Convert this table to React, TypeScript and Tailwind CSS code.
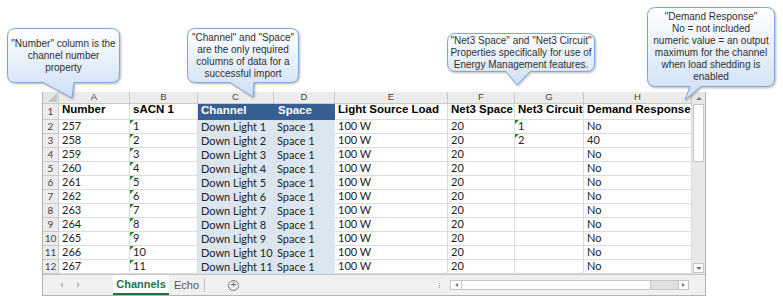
import React from 'react';

interface Row {
  num: number;
  sacn: number;
  channel: string;
  space: string;
  load: string;
  net3Space: string;
  circuit: string;
  demand: string;
}

const ROWS: Row[] = Array.from({ length: 11 }, (_, i) => ({
  num: 257 + i,
  sacn: i + 1,
  channel: `Down Light ${i + 1}`,
  space: 'Space 1',
  load: '100 W',
  net3Space: '20',
  circuit: i < 2 ? String(i + 1) : '',
  demand: i === 1 ? '40' : 'No',
}));

const COL_LETTERS = ['A', 'B', 'C', 'D', 'E', 'F', 'G', 'H'];

interface CalloutProps {
  id: string;
  left: number;
  top: number;
  w: number;
  h: number;
  x1: number;
  x2: number;
  tx: number;
  ty: number;
  lines: string[];
}

// speech bubble drawn in svg, text laid over it
const Callout: React.FC<CalloutProps> = ({ id, left, top, w, h, x1, x2, tx, ty, lines }) => {
  const r = 8;
  const d = `M${r + 0.5},0.5 H${w - r - 0.5} Q${w - 0.5},0.5 ${w - 0.5},${r + 0.5} V${h - r - 0.5} Q${w - 0.5},${h - 0.5} ${w - r - 0.5},${h - 0.5} H${x2} L${tx},${ty} L${x1},${h - 0.5} H${r + 0.5} Q0.5,${h - 0.5} 0.5,${h - r - 0.5} V${r + 0.5} Q0.5,0.5 ${r + 0.5},0.5 Z`;
  return (
    <div className="absolute" style={{ left, top, width: w, height: h }}>
      <svg
        className="absolute left-0 top-0 overflow-visible drop-shadow-[1px_1px_1px_rgba(0,0,0,0.28)]"
        width={Math.max(w, tx) + 2}
        height={ty + 2}
      >
        <defs>
          <linearGradient id={id} x1="0" y1="0" x2="0" y2="1">
            <stop offset="0" stopColor="#ffffff" />
            <stop offset="1" stopColor="#cddff5" />
          </linearGradient>
        </defs>
        <path d={d} fill={`url(#${id})`} stroke="#7fa5dc" strokeWidth="1" />
      </svg>
      <div className="relative flex h-full flex-col items-center justify-center font-['Liberation_Sans',Arial,sans-serif] text-[10px] leading-[12px] text-[#303030]">
        {lines.map((l) => (
          <span key={l} className="whitespace-nowrap">{l}</span>
        ))}
      </div>
    </div>
  );
};

const Flag = () => (
  <span className="absolute left-0 top-0 h-0 w-0 border-r-[4px] border-t-[4px] border-r-transparent border-t-[#1e8a2e]" />
);

const cell = 'relative flex h-[14px] items-center overflow-hidden whitespace-nowrap border-b border-r border-[#dcdcdc] bg-white pl-[3px]';
const blueCell = 'relative flex h-[14px] items-center overflow-hidden whitespace-nowrap bg-[#dce6f1] pl-[3px]';
const rowHead = 'flex h-[14px] items-center justify-center border-b border-r border-[#c9c9c9] bg-[#ececec] text-[10px] text-[#444]';

export default function App() {
  return (
    <div className="relative h-[296px] w-[783px] overflow-hidden bg-white font-['Lato',sans-serif] text-[11px] text-[#222]">
      <div className="pl-[42px] pt-[92px]">
        <div className="w-[664px] border border-t-0 border-[#b4b4b4]">
          <div className="flex">
            <div className="grid grid-cols-[16px_71px_68px_76px_61px_113px_67px_69px_108px]">
              {/* column letters */}
              <div className="relative h-[12px] border-b border-r border-[#c9c9c9] bg-[#e6e6e6]">
                <span className="absolute bottom-[1px] right-[1px] h-0 w-0 border-b-[9px] border-l-[9px] border-b-[#c4c4c4] border-l-transparent" />
              </div>
              {COL_LETTERS.map((c) => (
                <div
                  key={c}
                  className="flex h-[12px] items-center justify-center border-b border-r border-[#c9c9c9] bg-[#ececec] font-['Liberation_Sans',Arial,sans-serif] text-[9.5px] text-[#444]"
                >
                  {c}
                </div>
              ))}

              {/* row 1 headers */}
              <div className="flex h-[16px] items-center justify-center border-b border-r border-[#c9c9c9] bg-[#ececec] text-[10px] text-[#444]">1</div>
              {['Number', 'sACN 1'].map((t) => (
                <div key={t} className="flex h-[16px] items-end overflow-hidden whitespace-nowrap border-b border-r border-[#dcdcdc] pb-[1px] pl-[3px] font-['Liberation_Sans',Arial,sans-serif] text-[11.5px] font-bold text-black">{t}</div>
              ))}
              <div className="flex h-[16px] items-end overflow-hidden whitespace-nowrap bg-[#366092] pb-[1px] pl-[3px] font-['Liberation_Sans',Arial,sans-serif] text-[11.5px] font-bold text-white">Channel</div>
              <div className="flex h-[16px] items-end overflow-hidden whitespace-nowrap bg-[#366092] pb-[1px] pl-[4px] font-['Liberation_Sans',Arial,sans-serif] text-[11.5px] font-bold text-white">Space</div>
              {['Light Source Load', 'Net3 Space', 'Net3 Circuit', 'Demand Response'].map((t) => (
                <div key={t} className="flex h-[16px] items-end overflow-hidden whitespace-nowrap border-b border-r border-[#dcdcdc] pb-[1px] pl-[3px] font-['Liberation_Sans',Arial,sans-serif] text-[11.5px] font-bold text-black">{t}</div>
              ))}

              {ROWS.map((r, i) => (
                <React.Fragment key={r.num}>
                  <div className={rowHead}>{i + 2}</div>
                  <div className={cell}>{r.num}</div>
                  <div className={cell}><Flag />{r.sacn}</div>
                  <div className={blueCell}>{r.channel}</div>
                  <div className={blueCell}>{r.space}</div>
                  <div className={cell}>{r.load}</div>
                  <div className={cell}>{r.net3Space}</div>
                  <div className={cell}>{r.circuit && <Flag />}{r.circuit}</div>
                  <div className={cell}>{r.demand}</div>
                </React.Fragment>
              ))}
            </div>

            {/* vertical scrollbar */}
            <div className="flex w-[14px] flex-col items-center bg-[#e8e8e8]">
              <div className="flex h-[12px] w-full items-center justify-center">
                <span className="h-0 w-0 border-x-[3px] border-b-[3px] border-x-transparent border-b-[#777]" />
              </div>
              <div className="h-[58px] w-[11px] border border-[#c6c6c6] bg-white" />
              <div className="flex-1" />
              <div className="mb-[1px] flex h-[10px] w-[11px] items-center justify-center border border-[#c6c6c6] bg-white">
                <span className="h-0 w-0 border-x-[3px] border-t-[3px] border-x-transparent border-t-[#777]" />
              </div>
            </div>
          </div>

          {/* sheet tabs + horizontal scrollbar */}
          <div className="flex h-[21px] items-center border-t border-[#c4c4c4] bg-[#f0f0f0] font-['Liberation_Sans',Arial,sans-serif]">
            <div className="flex w-[70px] items-center gap-[14px] pl-[17px]">
              <span className="h-0 w-0 border-y-[3px] border-r-[3px] border-y-transparent border-r-[#c0c0c0]" />
              <span className="h-0 w-0 border-y-[3px] border-l-[3px] border-y-transparent border-l-[#c0c0c0]" />
            </div>
            <div className="flex h-full w-[56px] items-center justify-center border-b-2 border-[#217346] bg-white pt-[1px] text-[11px] font-bold text-[#217346]">
              Channels
            </div>
            <div className="flex h-[14px] w-[36px] items-center justify-center border-r border-[#bdbdbd] text-[11px] text-[#555]">
              Echo
            </div>
            <div className="ml-[23px] flex h-[11px] w-[11px] items-center justify-center rounded-full border border-[#777] text-[10px] leading-none text-[#666]">
              +
            </div>
            <div className="ml-[200px] flex flex-col gap-[1px]">
              <span className="h-[1px] w-[1px] bg-[#999]" />
              <span className="h-[1px] w-[1px] bg-[#999]" />
              <span className="h-[1px] w-[1px] bg-[#999]" />
            </div>
            <div className="ml-[10px] flex h-[10px] w-[239px] items-stretch border border-[#c6c6c6] bg-[#e0e0e0]">
              <div className="flex w-[11px] items-center justify-center border-r border-[#c6c6c6] bg-white">
                <span className="h-0 w-0 border-y-[2.5px] border-r-[3px] border-y-transparent border-r-[#777]" />
              </div>
              <div className="w-[189px] border-r border-[#c6c6c6] bg-white" />
              <div className="flex-1" />
              <div className="flex w-[10px] items-center justify-center border-l border-[#c6c6c6] bg-white">
                <span className="h-0 w-0 border-y-[2.5px] border-l-[3px] border-y-transparent border-l-[#777]" />
              </div>
            </div>
          </div>
        </div>
      </div>

      <Callout
        id="c1"
        left={7}
        top={28}
        w={113}
        h={55}
        x1={36}
        x2={67}
        tx={65}
        ty={70}
        lines={['"Number" column is the', 'channel number', 'property']}
      />
      <Callout
        id="c2"
        left={187}
        top={28}
        w={112}
        h={55}
        x1={43}
        x2={67}
        tx={66}
        ty={69}
        lines={['"Channel" and "Space"', 'are the only required', 'columns of data for a', 'successful import']}
      />
      <Callout
        id="c3"
        left={447}
        top={33}
        w={148}
        h={39}
        x1={59}
        x2={83}
        tx={70}
        ty={52}
        lines={['"Net3 Space" and "Net3 Circuit"', 'Properties specifically for use of', 'Energy Management features.']}
      />
      <Callout
        id="c4"
        left={647}
        top={7}
        w={128}
        h={80}
        x1={43}
        x2={54}
        tx={38}
        ty={93}
        lines={['"Demand Response"', 'No = not included', 'numeric value = an output', 'maximum for the channel', 'when load shedding is', 'enabled']}
      />
    </div>
  );
}
